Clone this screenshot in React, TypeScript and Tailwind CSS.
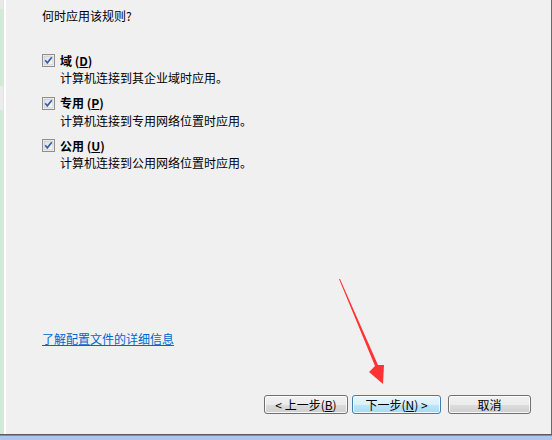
import React from "react";

const font = { fontFamily: '"SimSun", "Noto Sans CJK SC", "Liberation Sans", sans-serif' };

const CheckBox = () => (
  <svg width="13" height="13" viewBox="0 0 13 13" className="shrink-0">
    <defs>
      <linearGradient id="cbg" x1="0" y1="0" x2="1" y2="1">
        <stop offset="0" stopColor="#dcdcdc" />
        <stop offset="1" stopColor="#fbfbfb" />
      </linearGradient>
    </defs>
    <rect x="0.5" y="0.5" width="12" height="12" fill="#ffffff" stroke="#8e8f8f" />
    <rect x="2" y="2" width="9" height="9" fill="url(#cbg)" stroke="#c4c4c4" strokeWidth="0.8" />
    <path d="M3.2 6.3 L5.3 8.8 L9.8 3.2" fill="none" stroke="#3a5fa8" strokeWidth="1.7" />
  </svg>
);

const Option = ({ label, accel, desc }: { label: string; accel: string; desc: string }) => (
  <div className="flex flex-col">
    <div className="flex items-center h-[17px]">
      <CheckBox />
      <span className="ml-[5px] font-bold text-[12px] text-black">
        {label} (<span className="underline">{accel}</span>)
      </span>
    </div>
    <div className="pl-[18px] text-[12px] leading-[18px] text-black">{desc}</div>
  </div>
);

const Btn = ({ children, w, primary }: { children: React.ReactNode; w: string; primary?: boolean }) => (
  <div
    className={`${w} h-[19px] rounded-[3px] border flex items-center justify-center text-[12px] text-black ${
      primary
        ? "border-[#3c7fb1] bg-[linear-gradient(#eaf6fd_0%,#d9f0fc_50%,#bee6fd_51%,#a7d9f5_100%)]"
        : "border-[#707070] bg-[linear-gradient(#f2f2f2_0%,#ebebeb_50%,#dddddd_51%,#cfcfcf_100%)]"
    } shadow-[inset_0_0_0_1px_rgba(255,255,255,0.8)]`}
  >
    {children}
  </div>
);

export default function App() {
  return (
    <div className="w-[552px] h-[440px] flex flex-col bg-[#f0f0f0] relative overflow-hidden" style={font}>
      <div className="flex flex-1 min-h-0">
        <div className="w-[3px] flex flex-col">
          <div className="h-[9px] bg-[#e8e8e8]" />
          <div className="h-[77px] bg-[#d1e9d7]" />
          <div className="h-[24px] bg-[#ececec]" />
          <div className="flex-1 bg-[#d1e9d7]" />
        </div>
        <div className="w-[1px] bg-[#e3e3e3]" />
        <div className="w-[2px] bg-white" />
        <div className="flex-1 flex flex-col border-r border-[#6a6a6a] pl-[36px] pt-[8px]">
          <div className="text-[12px] leading-[16px] text-black">何时应用该规则?</div>
          <div className="mt-[28px] flex flex-col gap-[7.5px]">
            <Option label="域" accel="D" desc="计算机连接到其企业域时应用。" />
            <Option label="专用" accel="P" desc="计算机连接到专用网络位置时应用。" />
            <Option label="公用" accel="U" desc="计算机连接到公用网络位置时应用。" />
          </div>
          <div className="mt-[159px] text-[12px] leading-[16px] text-[#0066cc] underline">
            了解配置文件的详细信息
          </div>
          <div className="mt-[48px] flex justify-end pr-[20px]">
            <Btn w="w-[84px]">
              &lt; 上一步(<span className="underline">B</span>)
            </Btn>
            <div className="ml-[4px]">
              <Btn w="w-[89px]" primary>
                下一步(<span className="underline">N</span>) &gt;
              </Btn>
            </div>
            <div className="ml-[7px]">
              <Btn w="w-[83px]">取消</Btn>
            </div>
          </div>
        </div>
      </div>
      <div className="h-[1px] bg-[#5a5a5a]" />
      <div className="h-[1px] bg-[#8c8c8c]" />
      <div className="h-[4px] bg-[#a9c8ea]" />
      <svg className="absolute left-0 top-0 pointer-events-none" width="552" height="440">
        <polygon
          points="339,279 375,366 369,372 383,384 384,365 378,365 340,279"
          fill="#ff3333"
        />
      </svg>
    </div>
  );
}
